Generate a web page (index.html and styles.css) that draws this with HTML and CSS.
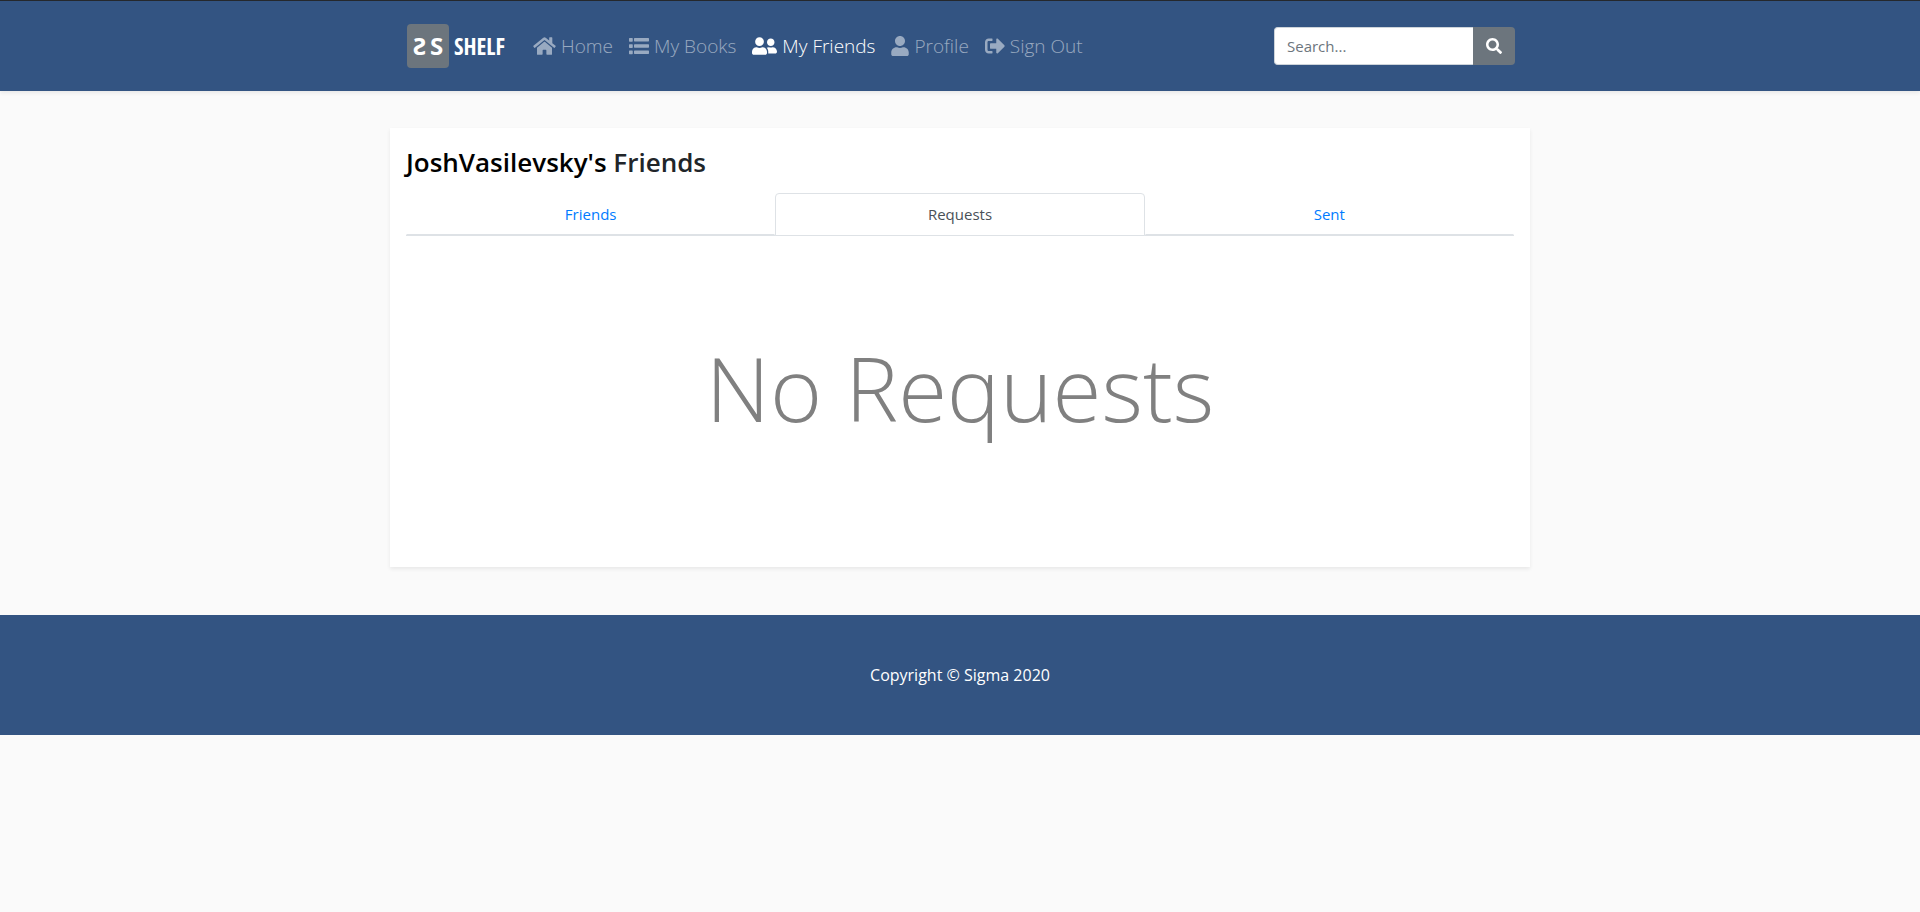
FILE: index.html
```html
<!DOCTYPE html>
<html lang="en">
<head>
<meta charset="utf-8">
<meta name="viewport" content="width=device-width, initial-scale=1">
<title>SS Shelf - My Friends</title>
<link rel="stylesheet" href="styles.css">
</head>
<body>
<header class="navbar">
  <div class="container navbar-inner">
    <a class="brand" href="#"><span class="brand-mark"><span>Ƨ</span><span>S</span></span><span class="brand-name">SHELF</span></a>
    <nav class="nav" aria-label="Main">
      <a class="nav-link" href="#"><svg class="icon icon-home" viewBox="0 0 576 512" aria-hidden="true"><path d="M280.37 148.26L96 300.11V464a16 16 0 0 0 16 16l112.06-.29a16 16 0 0 0 15.92-16V368a16 16 0 0 1 16-16h64a16 16 0 0 1 16 16v95.64a16 16 0 0 0 16 16.05L464 480a16 16 0 0 0 16-16V300L295.67 148.26a12.19 12.19 0 0 0-15.3 0zM571.6 251.47L488 182.56V44.05a12 12 0 0 0-12-12h-56a12 12 0 0 0-12 12v72.61L318.47 43a48 48 0 0 0-61 0L4.34 251.47a12 12 0 0 0-1.6 16.9l25.5 31A12 12 0 0 0 45.15 301l235.22-193.74a12.19 12.19 0 0 1 15.3 0L530.9 301a12 12 0 0 0 16.9-1.6l25.5-31a12 12 0 0 0-1.7-16.93z"/></svg>Home</a>
      <a class="nav-link" href="#"><svg class="icon" viewBox="0 0 512 512" aria-hidden="true"><path d="M80 368H16a16 16 0 0 0-16 16v64a16 16 0 0 0 16 16h64a16 16 0 0 0 16-16v-64a16 16 0 0 0-16-16zm0-320H16A16 16 0 0 0 0 64v64a16 16 0 0 0 16 16h64a16 16 0 0 0 16-16V64a16 16 0 0 0-16-16zm0 160H16a16 16 0 0 0-16 16v64a16 16 0 0 0 16 16h64a16 16 0 0 0 16-16v-64a16 16 0 0 0-16-16zM496 372H144a16 16 0 0 0-16 16v56a16 16 0 0 0 16 16h352a16 16 0 0 0 16-16v-56a16 16 0 0 0-16-16zm0-320H144a16 16 0 0 0-16 16v56a16 16 0 0 0 16 16h352a16 16 0 0 0 16-16V68a16 16 0 0 0-16-16zm0 160H144a16 16 0 0 0-16 16v56a16 16 0 0 0 16 16h352a16 16 0 0 0 16-16v-56a16 16 0 0 0-16-16z"/></svg>My Books</a>
      <a class="nav-link active" href="#" aria-current="page"><svg class="icon icon-friends" viewBox="0 0 640 512" aria-hidden="true"><path d="M192 256c61.900 0 112-50.100 112-112S253.900 32 192 32 80 82.100 80 144s50.100 112 112 112zm76.800 32h-8.300c-20.800 10-43.900 16-68.500 16s-47.600-6-68.500-16h-8.300C51.600 288 0 339.600 0 403.200V432c0 26.500 21.500 48 48 48h288c26.500 0 48-21.500 48-48v-28.800c0-63.600-51.600-115.200-115.200-115.200zM480 256c53 0 96-43 96-96s-43-96-96-96-96 43-96 96 43 96 96 96zm48 32h-3.800c-13.900 4.800-28.600 8-44.200 8s-30.300-3.200-44.200-8H432c-20.400 0-39.200 5.900-55.700 15.400 24.400 26.300 39.700 61.200 39.700 99.800v38.400c0 2.200-.5 4.300-.6 6.400H592c26.500 0 48-21.500 48-48 0-61.900-50.100-112-112-112z"/></svg>My Friends</a>
      <a class="nav-link" href="#"><svg class="icon icon-user" viewBox="0 0 448 512" aria-hidden="true"><path d="M224 256c70.700 0 128-57.300 128-128S294.700 0 224 0 96 57.300 96 128s57.300 128 128 128zm89.600 32h-16.700c-22.200 10.200-46.900 16-72.900 16s-50.600-5.800-72.900-16h-16.700C60.200 288 0 348.200 0 422.400V464c0 26.500 21.500 48 48 48h352c26.500 0 48-21.500 48-48v-41.600c0-74.200-60.200-134.400-134.400-134.400z"/></svg>Profile</a>
      <a class="nav-link" href="#"><svg class="icon" viewBox="0 0 512 512" aria-hidden="true"><path d="M497 273L329 441c-15 15-41 4.500-41-17v-96H152c-13.300 0-24-10.700-24-24v-96c0-13.300 10.700-24 24-24h136V88c0-21.400 25.900-32 41-17l168 168c9.300 9.400 9.300 24.600 0 34zM192 436v-40c0-6.600-5.400-12-12-12H96c-17.700 0-32-14.300-32-32V160c0-17.700 14.300-32 32-32h84c6.600 0 12-5.400 12-12V76c0-6.600-5.400-12-12-12H96c-53 0-96 43-96 96v192c0 53 43 96 96 96h84c6.600 0 12-5.400 12-12z"/></svg>Sign Out</a>
    </nav>
    <form class="search" role="search">
      <input class="search-input" type="search" placeholder="Search..." aria-label="Search">
      <button class="search-button" type="button" aria-label="Submit search"><svg class="icon-search" viewBox="0 0 512 512" aria-hidden="true"><path d="M505 442.700L405.300 343c-4.500-4.500-10.600-7-17-7H372c27.600-35.300 44-79.700 44-128C416 93.100 322.900 0 208 0S0 93.100 0 208s93.100 208 208 208c48.300 0 92.700-16.400 128-44v16.300c0 6.400 2.500 12.500 7 17l99.700 99.700c9.400 9.400 24.600 9.400 33.900 0l28.300-28.300c9.400-9.400 9.400-24.600.1-34zM208 336c-70.700 0-128-57.200-128-128 0-70.700 57.200-128 128-128 70.700 0 128 57.200 128 128 0 70.700-57.200 128-128 128z"/></svg></button>
    </form>
  </div>
</header>
<main class="container card">
  <h1 class="title"><a class="title-user" href="#">JoshVasilevsky's</a> Friends</h1>
  <nav class="tabs" aria-label="Friend lists">
    <a class="tab" href="#">Friends</a>
    <a class="tab active" href="#" aria-current="page">Requests</a>
    <a class="tab" href="#">Sent</a>
  </nav>
  <p class="empty">No Requests</p>
</main>
<footer class="footer">
  <p class="copyright">Copyright © Sigma 2020</p>
</footer>
</body>
</html>
```
FILE: styles.css
```css
* { box-sizing: border-box; }

body {
  margin: 0;
  background: #fafafa;
  color: #212529;
  font-family: "Open Sans", "Noto Sans", sans-serif;
  font-size: 15px;
  line-height: 24px;
}

a { text-decoration: none; }

.container {
  width: 100%;
  max-width: 1140px;
  margin: 0 auto;
}

.navbar {
  background: #335482;
  border-top: 1px solid #25282c;
  box-shadow: 0 2px 4px rgba(0, 0, 0, 0.075);
}

.navbar-inner {
  display: flex;
  align-items: center;
  min-height: 90px;
  padding: 0 15px 0 17px;
}

.brand {
  display: flex;
  align-items: center;
  gap: 5px;
  margin-right: 20px;
  color: #fff;
  font-weight: 700;
}

.brand-mark {
  display: flex;
  align-items: center;
  justify-content: center;
  gap: 4px;
  width: 42px;
  height: 44px;
  border-radius: 4px;
  background: #6c757d;
  font-family: "Noto Sans", sans-serif;
  font-size: 24px;
}

.brand-name {
  font-family: "Open Sans Condensed", "Noto Sans Condensed", "Roboto Condensed", "Open Sans", sans-serif;
  font-size: 23px;
}

.nav { display: flex; }

.nav-link {
  display: flex;
  align-items: center;
  gap: 5px;
  padding: 8px;
  color: rgba(255, 255, 255, 0.5);
  font-size: 19px;
  font-weight: 300;
  line-height: 30px;
}

.nav-link.active { color: #fff; }

.icon {
  width: 20px;
  height: 20px;
  fill: currentColor;
}

.icon-home { width: 23px; }
.icon-friends { width: 25px; }
.icon-user { width: 18px; }

.search {
  display: flex;
  margin-left: auto;
}

.search-input {
  width: 199px;
  height: 38px;
  padding: 6px 12px;
  border: 1px solid #ced4da;
  border-right: 0;
  border-radius: 4px 0 0 4px;
  background: #fff;
  font: inherit;
}

.search-input::placeholder { color: #6c757d; }

.search-button {
  display: flex;
  align-items: center;
  justify-content: center;
  width: 42px;
  border: 0;
  border-radius: 0 4px 4px 0;
  background: #6c757d;
  color: #fff;
}

.icon-search {
  width: 16px;
  height: 16px;
  fill: currentColor;
}

.card {
  margin-top: 37px;
  margin-bottom: 48px;
  padding: 16px;
  background: #fff;
  box-shadow: 0 2px 4px rgba(0, 0, 0, 0.075);
}

.title {
  margin: 0 0 12px;
  font-size: 26px;
  font-weight: 600;
  line-height: 37px;
}

.title-user { color: #000; }

.tabs {
  display: flex;
  border-bottom: 1px solid #dee2e6;
}

.tab {
  flex: 1;
  padding: 8px 16px;
  border: 1px solid transparent;
  border-bottom-color: #dee2e6;
  color: #007bff;
  font-size: 15px;
  text-align: center;
}

.tab.active {
  margin-bottom: -1px;
  border-color: #dee2e6;
  border-radius: 4px 4px 0 0;
  background: #fff;
  color: #495057;
}

.empty {
  margin: 94px 0 106px;
  color: #808080;
  font-size: 89px;
  font-weight: 300;
  line-height: 115px;
  text-align: center;
}

.footer {
  padding: 48px 16px;
  background: #335482;
  color: #fff;
  text-align: center;
}

.copyright {
  margin: 0;
  font-size: 16px;
}
```
